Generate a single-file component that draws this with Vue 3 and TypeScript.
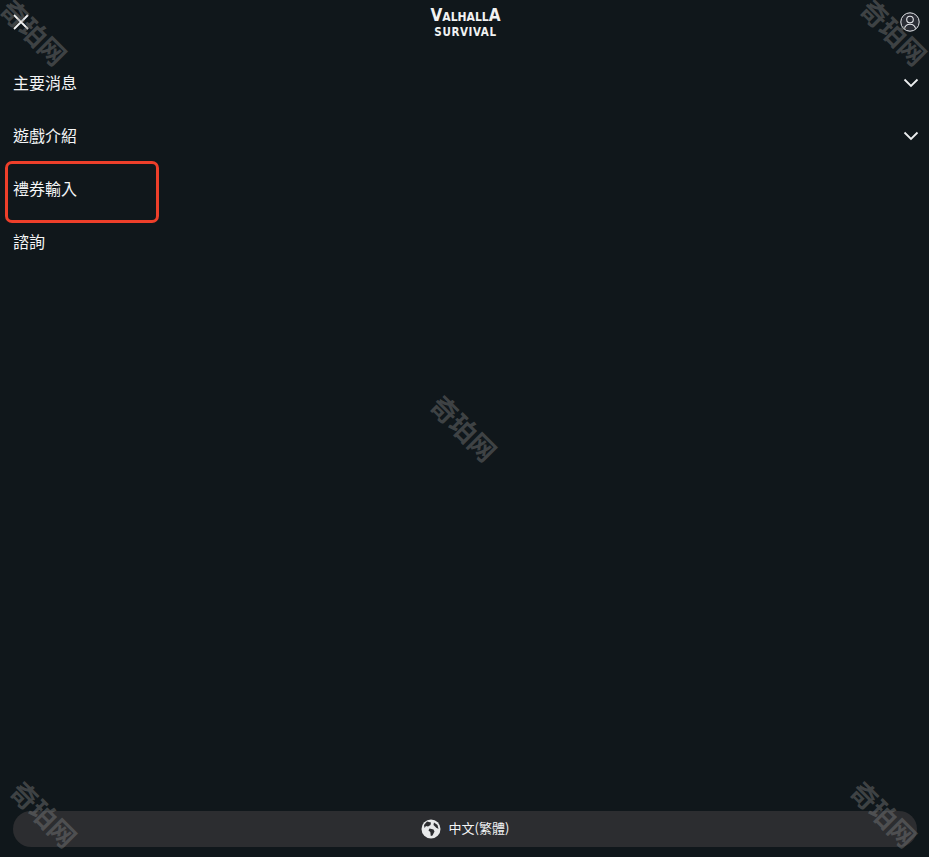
<script setup lang="ts">
interface MenuItem { label: string; expandable: boolean }
const items: MenuItem[] = [
  { label: '主要消息', expandable: true },
  { label: '遊戲介紹', expandable: true },
  { label: '禮券輸入', expandable: false },
  { label: '諮詢', expandable: false },
]
const marks = [
  { x: 34, y: 32 },
  { x: 894, y: 32 },
  { x: 464, y: 428 },
  { x: 44, y: 814 },
  { x: 884, y: 814 },
]
</script>

<template>
  <div class="page">
    <header class="top">
      <button class="icon-btn" aria-label="close">
        <svg width="20" height="20" viewBox="0 0 20 20"><path d="M3 3 17 17M17 3 3 17" stroke="#f2f3f4" stroke-width="1.8" fill="none" /></svg>
      </button>
      <div class="logo">
        <span class="logo-a"><b class="big">V</b>ALHALL<b class="big">A</b></span>
        <span class="logo-b">SURVIVAL</span>
      </div>
      <button class="icon-btn user" aria-label="account">
        <svg width="20" height="20" viewBox="0 0 20 20">
          <circle cx="10" cy="10" r="9.2" fill="#2a2d35" stroke="#e4e6ea" stroke-width="1" />
          <circle cx="10" cy="7.6" r="3.3" fill="none" stroke="#e4e6ea" stroke-width="1.1" />
          <path d="M4.4 16.6c.7-3 2.8-4.4 5.6-4.4s4.900 1.400 5.600 4.400" fill="none" stroke="#e4e6ea" stroke-width="1.1" />
        </svg>
      </button>
    </header>

    <nav class="menu">
      <div v-for="item in items" :key="item.label" class="row">
        <span class="label">{{ item.label }}</span>
        <svg v-if="item.expandable" class="chev" width="16" height="10" viewBox="0 0 16 10"><path d="M1.500 1.500 8 8l6.500-6.500" stroke="#eceeef" stroke-width="1.800" fill="none" /></svg>
      </div>
    </nav>

    <div class="spacer"></div>

    <div class="lang">
      <svg width="20" height="20" viewBox="0 0 20 20">
        <circle cx="10" cy="10" r="9.500" fill="#e8e9ea" />
        <path d="M6 2.500 10 3.500 9.500 6 7 7.500 5 7 3.500 9 3 6Z" fill="#2c2d30" />
        <path d="M8.500 9.500 12.500 10.500 13.500 12.500 11.500 16.500 9.800 17 9.300 13 7.500 11.500Z" fill="#2c2d30" />
        <path d="M13 3.500 16.500 6 17.500 10 15 8.500 12.500 6Z" fill="#2c2d30" />
      </svg>
      <span class="lang-text">中文(繁體)</span>
    </div>

    <div class="highlight"></div>
    <span v-for="m in marks" :key="m.x + '-' + m.y" class="mark" :style="{ left: m.x + 'px', top: m.y + 'px' }">奇珀网</span>
  </div>
</template>

<style>
html, body { margin: 0; background: #10171b; }
</style>

<style scoped>
.page {
  position: relative;
  width: 929px;
  height: 857px;
  overflow: hidden;
  display: flex;
  flex-direction: column;
  background: #10171b;
  color: #f4f5f6;
  font-family: "Noto Sans CJK TC", "Noto Sans", sans-serif;
}
.top {
  height: 56px;
  flex: none;
  display: flex;
  align-items: flex-start;
  justify-content: space-between;
  padding: 0 9px 0 11px;
  box-sizing: border-box;
}
.icon-btn {
  width: 20px;
  height: 20px;
  margin-top: 12px;
  padding: 0;
  border: 0;
  background: none;
  display: flex;
}
.logo {
  margin-top: 6px;
  display: flex;
  flex-direction: column;
  align-items: center;
  font-family: "DejaVu Sans Condensed", "DejaVu Sans", sans-serif;
  font-weight: 700;
  color: #f1f2f2;
  line-height: 1;
}
.logo-a { font-size: 12px; height: 20px; line-height: 19px; white-space: nowrap; }
.big { font-size: 17px; font-weight: 700; }
.logo-b { font-size: 11.5px; letter-spacing: 0.6px; height: 12px; line-height: 12px; white-space: nowrap; }
.menu { display: flex; flex-direction: column; }
.row {
  height: 53px;
  display: flex;
  align-items: center;
  justify-content: space-between;
  padding: 0 10px 0 13px;
  font-size: 16px;
}
.label { margin-bottom: 2px; }
.chev { display: block; }
.spacer { flex: 1; }
.lang {
  height: 36px;
  flex: none;
  margin: 0 12px 10px 13px;
  border-radius: 18px;
  background: #2c2d30;
  display: flex;
  align-items: center;
  justify-content: center;
  gap: 8px;
  font-size: 13px;
}
.lang-text { margin-bottom: 3px; }
.highlight {
  position: absolute;
  left: 5px;
  top: 161px;
  width: 154px;
  height: 62px;
  box-sizing: border-box;
  border: 3.5px solid #ee3f2a;
  border-radius: 7px;
  pointer-events: none;
}
.mark {
  position: absolute;
  transform: translate(-50%, -50%) rotate(45deg);
  font-size: 26.5px;
  font-weight: 700;
  line-height: 1;
  white-space: nowrap;
  color: rgba(130, 130, 130, 0.42);
  pointer-events: none;
}
</style>
